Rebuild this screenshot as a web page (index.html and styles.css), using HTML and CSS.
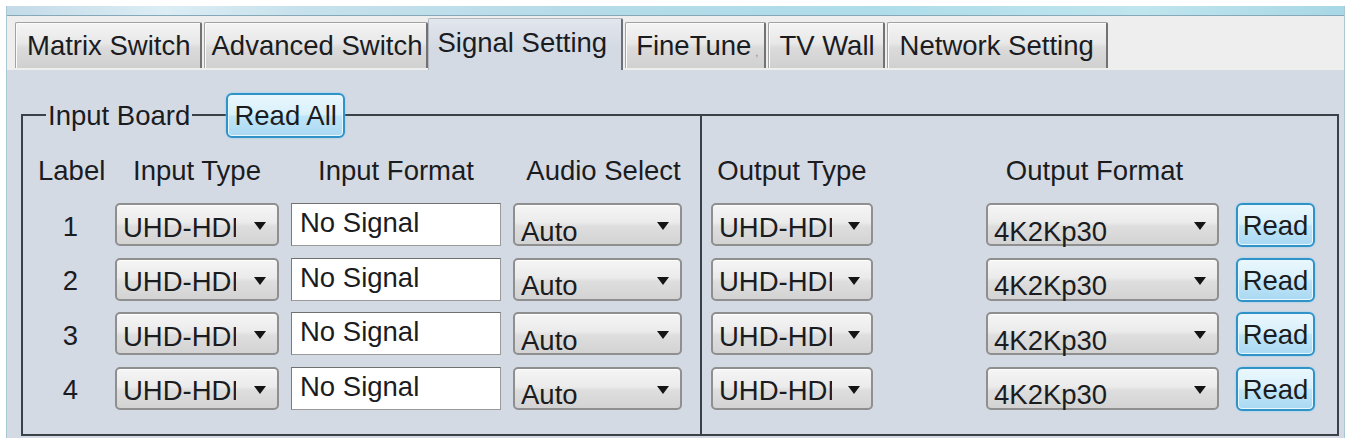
FILE: index.html
```html
<!DOCTYPE html>
<html>
<head>
<meta charset="utf-8">
<title>Signal Setting</title>
<link rel="stylesheet" href="styles.css">
</head>
<body>
<div class="frame">
  <div class="caption"></div>
  <div class="tabstrip">
    <div class="tab">Matrix Switch</div>
    <div class="tab tab-before-active">Advanced Switch</div>
    <div class="tab tab-active">Signal Setting</div>
    <div class="tab tab-fine">FineTune<span class="mark">,</span></div>
    <div class="tab tab-tv">TV Wall</div>
    <div class="tab tab-net">Network Setting</div>
  </div>
  <div class="panel">
    <div class="group">
      <div class="col col-in">
        <div class="legend">
          <span class="legend-text">Input Board</span>
          <button class="btn btn-readall">Read All</button>
        </div>
        <div class="grid grid-in">
          <div class="hdr">Label</div>
          <div class="hdr">Input Type</div>
          <div class="hdr">Input Format</div>
          <div class="hdr hdr-audio">Audio Select</div>

          <div class="num">1</div>
          <div class="combo"><span class="val val-clip">UHD-HDMI</span></div>
          <div class="tbox">No Signal</div>
          <div class="combo"><span class="val val-low">Auto</span></div>

          <div class="num">2</div>
          <div class="combo"><span class="val val-clip">UHD-HDMI</span></div>
          <div class="tbox">No Signal</div>
          <div class="combo"><span class="val val-low">Auto</span></div>

          <div class="num">3</div>
          <div class="combo"><span class="val val-clip">UHD-HDMI</span></div>
          <div class="tbox">No Signal</div>
          <div class="combo"><span class="val val-low">Auto</span></div>

          <div class="num">4</div>
          <div class="combo"><span class="val val-clip">UHD-HDMI</span></div>
          <div class="tbox">No Signal</div>
          <div class="combo"><span class="val val-low">Auto</span></div>
        </div>
      </div>
      <div class="col col-out">
        <div class="grid grid-out">
          <div class="hdr">Output Type</div>
          <div class="hdr hdr-fmt">Output Format</div>
          <div class="hdr"></div>

          <div class="combo"><span class="val val-clip">UHD-HDMI</span></div>
          <div class="combo combo-fmt"><span class="val val-low">4K2Kp30</span></div>
          <button class="btn btn-read">Read</button>

          <div class="combo"><span class="val val-clip">UHD-HDMI</span></div>
          <div class="combo combo-fmt"><span class="val val-low">4K2Kp30</span></div>
          <button class="btn btn-read">Read</button>

          <div class="combo"><span class="val val-clip">UHD-HDMI</span></div>
          <div class="combo combo-fmt"><span class="val val-low">4K2Kp30</span></div>
          <button class="btn btn-read">Read</button>

          <div class="combo"><span class="val val-clip">UHD-HDMI</span></div>
          <div class="combo combo-fmt"><span class="val val-low">4K2Kp30</span></div>
          <button class="btn btn-read">Read</button>
        </div>
      </div>
    </div>
  </div>
</div>
</body>
</html>
```

FILE: styles.css
```css
* {
  box-sizing: border-box;
}

body {
  margin: 0;
  width: 1354px;
  height: 447px;
  overflow: hidden;
  background: #ffffff;
  font-family: "Liberation Sans", Arial, sans-serif;
  font-size: 27.5px;
  color: #1b1c1f;
}

.frame {
  margin: 6px 0 0 6px;
  width: 1339px;
  border-left: 1px solid #a9c8d6;
  border-right: 1px solid #a9c8d6;
}

.caption {
  height: 10px;
  background: linear-gradient(90deg, #c3dbe8 0%, #dcedf4 12%, #c6e1ec 22%, #b4dbe8 45%, #aedde9 65%, #bfe5ee 85%, #a8d7e5 100%);
  border-bottom: 1px solid #86a8b8;
}

.tabstrip {
  height: 54px;
  background: #eeeeee;
  display: flex;
  align-items: flex-end;
  padding-left: 8px;
}

.tab {
  height: 46px;
  margin: 0 2px 2px 0;
  padding: 0 9px 0 11px;
  display: flex;
  align-items: center;
  white-space: nowrap;
  background: linear-gradient(#f4f4f4, #e8e8e8 45%, #dbdbdb 55%, #d0d0d0);
  border: 1px solid #a2a2a2;
  border-right: 2px solid #727272;
  border-bottom: none;
  border-radius: 2px 2px 0 0;
  box-shadow: inset 1px 1px 0 #fbfbfb;
}

.tab-before-active {
  margin-right: 0;
  padding: 0 4px 0 7px;
}

.tab-active {
  height: 52px;
  margin: 0 2px 0 0;
  padding: 0 14px 4px 8px;
  background: linear-gradient(#e2e6ed, #d4dae4 55%);
  border: 1px solid #b3b8c0;
  border-right: 2px solid #6c6f75;
  border-bottom: none;
  box-shadow: none;
}

.tab-fine {
  padding: 0 6px 0 10px;
}

.tab-tv {
  padding: 0 8px 0 10px;
}

.tab-net {
  padding: 0 12px 0 12px;
}

.mark {
  font-size: 11px;
  color: #8a8a8a;
  margin: 12px 0 0 4px;
}

.panel {
  height: 368px;
  background: #d4dae4;
  padding: 44px 5px 2px 14px;
  display: flex;
}

.group {
  flex: 1;
  border: 2px solid #3c4148;
  display: flex;
}

.col-in {
  width: 679px;
  border-right: 2px solid #3c4148;
}

.col-out {
  flex: 1;
  padding: 39px 0 0 9px;
}

.legend {
  display: flex;
  align-items: center;
  height: 45px;
  margin: -23px 0 0 23px;
}

.legend-text {
  background: #d4dae4;
  padding: 0 2px;
  margin-right: 34px;
  line-height: 32px;
  white-space: nowrap;
}

.btn {
  font: inherit;
  color: inherit;
  padding: 0;
  border: 2px solid #2f93c8;
  border-radius: 6px;
  background: linear-gradient(#eaf7fd, #d8f0fb 48%, #bfe5f8 52%, #aad9f2);
  box-shadow: 0 0 2px #7fcdf0, inset 0 0 0 1px #e9f8ff;
  white-space: nowrap;
  line-height: 30px;
}

.btn-readall {
  width: 119px;
  height: 45px;
}

.btn-read {
  width: 79px;
  height: 44px;
  padding-top: 2px;
}

.grid {
  display: grid;
  grid-template-rows: 36.5px repeat(4, 43px);
  row-gap: 11.5px;
  align-items: start;
}

.grid-in {
  grid-template-columns: 65px 164px 210px 169px;
  column-gap: 12px;
  margin-top: 17px;
  padding-left: 15px;
}

.grid-out {
  grid-template-columns: 162px 329px 79px;
  column-gap: 17px;
}

.hdr {
  line-height: 32px;
  text-align: center;
  white-space: nowrap;
}

.hdr-audio {
  padding-left: 12px;
}

.hdr-fmt {
  width: 233px;
  justify-self: end;
  padding-right: 16px;
}

.num {
  height: 43px;
  display: flex;
  align-items: center;
  justify-content: center;
  padding-top: 4px;
}

.combo {
  height: 43px;
  border: 2px solid #8f8f8f;
  border-radius: 5px;
  background: linear-gradient(#f5f5f5, #ebebeb 45%, #dedede 55%, #d3d3d3);
  box-shadow: inset 0 1px 0 #ffffff;
  display: flex;
  align-items: center;
  padding: 0 11px 0 6px;
}

.combo::after {
  content: "";
  flex: none;
  margin-top: 3px;
  border-left: 6.5px solid transparent;
  border-right: 6.5px solid transparent;
  border-top: 8px solid #141414;
}

.combo-fmt {
  width: 233px;
  justify-self: end;
}

.val {
  flex: 1;
  white-space: nowrap;
  overflow: hidden;
  line-height: 30px;
  padding-top: 6px;
}

.val-clip {
  flex: 0 0 113px;
  margin-right: auto;
}

.val-low {
  padding-top: 14px;
}

.tbox {
  height: 43px;
  border: 1px solid #9a9a9a;
  border-top-color: #707070;
  border-left-color: #7c7c7c;
  background: #ffffff;
  padding: 4px 8px;
  line-height: 30px;
  white-space: nowrap;
}
```
